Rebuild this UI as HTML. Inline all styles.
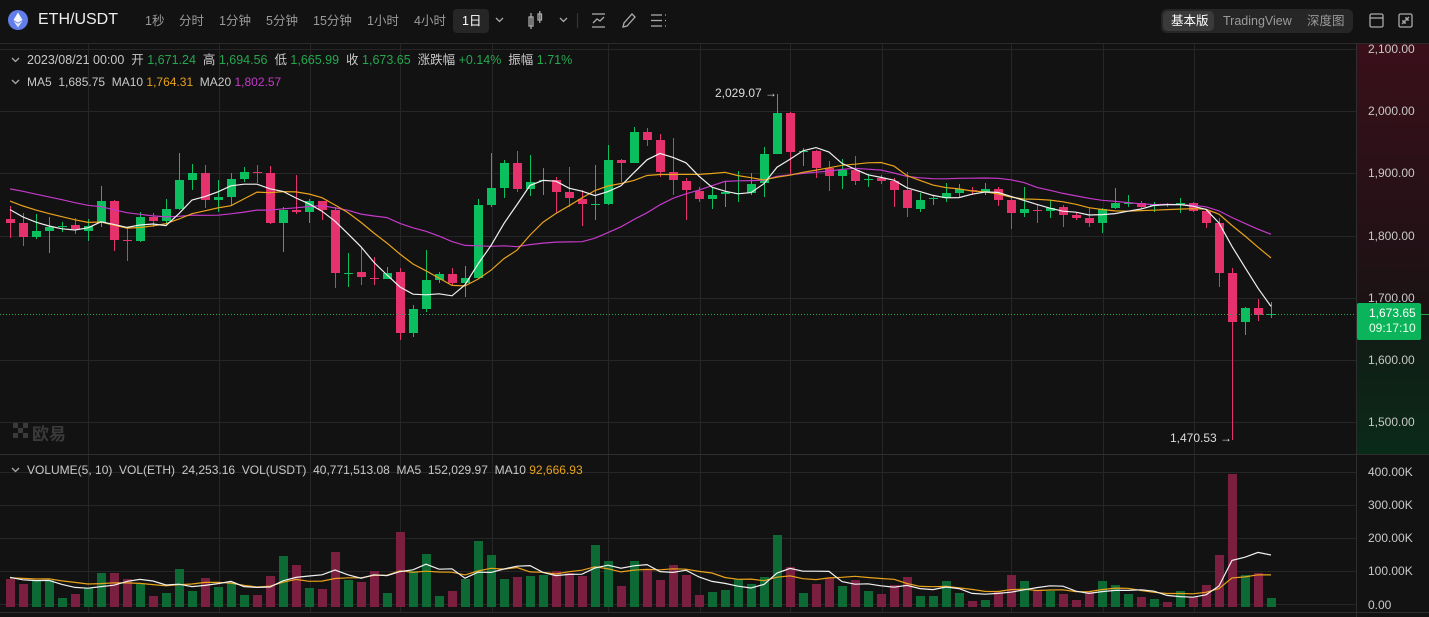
<!DOCTYPE html>
<html><head><meta charset="utf-8">
<style>
*{margin:0;padding:0;box-sizing:border-box}
body{width:1429px;height:617px;background:#121212;overflow:hidden;font-family:"Liberation Sans","Noto Sans CJK SC",sans-serif;color:#ddd;position:relative}
.t{position:absolute;white-space:nowrap}
.iv{position:absolute;top:12px;font-size:12.5px;line-height:18px;color:#9a9a9a;white-space:nowrap}
.g{color:#25a750}
.info{font-size:12.5px;line-height:16px;color:#c8c8c8}
.ax{position:absolute;left:1368px;font-size:12px;color:#c8c8c8}
</style></head><body>
<svg id="s" width="1429" height="617" style="position:absolute;left:0;top:0">
<defs>
<linearGradient id="rg" x1="0" y1="0" x2="0" y2="1"><stop offset="0" stop-color="#3a0f1a"/><stop offset="1" stop-color="#1a1214"/></linearGradient>
<linearGradient id="gg" x1="0" y1="0" x2="0" y2="1"><stop offset="0" stop-color="#121a15"/><stop offset="1" stop-color="#0a2a18"/></linearGradient>
</defs>
<rect x="1356" y="43" width="73" height="271" fill="url(#rg)"/>
<rect x="1356" y="314" width="73" height="140" fill="url(#gg)"/>
<g id="grid" stroke="#262626" stroke-width="1"></g>
<g id="vol"></g>
<g id="vma"></g>
<g id="cand"></g>
<g id="ma"></g>
<line x1="0" y1="314.5" x2="1356" y2="314.5" stroke="#25a750" stroke-width="1" stroke-dasharray="1,2"/>
<line x1="1421" y1="314.5" x2="1429" y2="314.5" stroke="#25a750"/>
<line x1="1356.5" y1="43" x2="1356.5" y2="617" stroke="#2e2e2e"/>
<line x1="0" y1="454.5" x2="1429" y2="454.5" stroke="#2e2e2e"/>
<line x1="0" y1="612.5" x2="1429" y2="612.5" stroke="#2e2e2e"/>
<line x1="0" y1="43.5" x2="1429" y2="43.5" stroke="#2b2b2b"/>
<rect x="1357" y="303" width="64" height="37" rx="2" fill="#0bb45a"/>
<circle cx="18" cy="20" r="10" fill="#627eea"/>
<path d="M18 12.5 L13.5 20 L18 22.6 L22.5 20 Z" fill="#fff" opacity="0.95"/>
<path d="M18 23.6 L13.5 21 L18 27.5 L22.5 21 Z" fill="#fff" opacity="0.8"/>
<g stroke="#aaa" fill="none" stroke-width="1.3">
<path d="M496 18 l3.5 3.5 l3.5 -3.5"/>
<rect x="529" y="17" width="4" height="9"/><line x1="531" y1="13" x2="531" y2="29"/>
<rect x="538" y="14" width="3.5" height="6"/><line x1="539.8" y1="11" x2="539.8" y2="23"/>
<path d="M560 18 l3.5 3.5 l3.5 -3.5"/>
<line x1="577.5" y1="13" x2="577.5" y2="28" stroke="#333"/>
<line x1="592" y1="14" x2="605" y2="14"/><line x1="592" y1="27" x2="605" y2="27"/><path d="M593 23 l4 -4 l3 2 l4 -4"/>
<path d="M623 27 l1 -4 l8 -9 l3 3 l-8 9 z"/>
<line x1="651" y1="15" x2="662" y2="15"/><line x1="651" y1="20.5" x2="662" y2="20.5"/><line x1="651" y1="26" x2="662" y2="26"/><line x1="665" y1="15" x2="666" y2="15"/><line x1="665" y1="20.5" x2="666" y2="20.5"/><line x1="665" y1="26" x2="666" y2="26"/>
<rect x="1370" y="14" width="13" height="13" rx="1.5"/><line x1="1370" y1="18" x2="1383" y2="18"/>
<rect x="1399" y="14" width="13" height="13" rx="1.5"/><path d="M1402 24 l3 -3 M1402 21 h3 v3 M1409 17 l-3 3 M1406 17 v3 h3"/>
<path d="M12 58 l3.5 3.5 l3.5 -3.5"/>
<path d="M12 80 l3.5 3.5 l3.5 -3.5"/>
<path d="M12 468 l3.5 3.5 l3.5 -3.5"/>
</g>
<rect x="1161" y="9" width="192" height="24" rx="6" fill="#262626"/>
<rect x="1163" y="11" width="51" height="20" rx="5" fill="#3a3a3a"/>
<rect x="453" y="9" width="36" height="24" rx="4" fill="#262626"/>
<g fill="#3a3a3a"><rect x="13" y="423" width="5" height="5"/><rect x="23" y="423" width="5" height="5"/><rect x="18" y="428" width="5" height="5"/><rect x="13" y="433" width="5" height="5"/><rect x="23" y="433" width="5" height="5"/></g>
</svg>
<div class="t" style="left:38px;top:11px;font-size:16px;color:#eee">ETH/USDT</div>
<div class="iv" style="left:145px">1秒</div>
<div class="iv" style="left:179px">分时</div>
<div class="iv" style="left:219px">1分钟</div>
<div class="iv" style="left:266px">5分钟</div>
<div class="iv" style="left:313px">15分钟</div>
<div class="iv" style="left:367px">1小时</div>
<div class="iv" style="left:414px">4小时</div>
<div class="iv" style="left:462px;color:#fff">1日</div>
<div class="iv" style="left:1171px;color:#fff">基本版</div>
<div class="iv" style="left:1223px">TradingView</div>
<div class="iv" style="left:1307px">深度图</div>
<div class="t" style="left:32px;top:420px;font-size:17px;color:#3a3a3a;font-weight:bold">欧易</div>

<div class="t info" style="left:27px;top:52px">2023/08/21 00:00&nbsp; 开 <span class="g">1,671.24</span>&nbsp; 高 <span class="g">1,694.56</span>&nbsp; 低 <span class="g">1,665.99</span>&nbsp; 收 <span class="g">1,673.65</span>&nbsp; 涨跌幅 <span class="g">+0.14%</span>&nbsp; 振幅 <span class="g">1.71%</span></div>
<div class="t info" style="left:27px;top:74px;font-size:12px">MA5&nbsp; 1,685.75&nbsp; MA10 <span style="color:#e8a21b">1,764.31</span>&nbsp; MA20 <span style="color:#c43ac9">1,802.57</span></div>
<div class="t info" style="left:27px;top:462px;font-size:12px">VOLUME(5, 10)&nbsp; VOL(ETH)&nbsp; 24,253.16&nbsp; VOL(USDT)&nbsp; 40,771,513.08&nbsp; MA5&nbsp; 152,029.97&nbsp; MA10 <span style="color:#e8a21b">92,666.93</span></div>
<div class="t info" style="left:715px;top:85px;color:#ddd;font-size:12px">2,029.07 →</div>
<div class="t info" style="left:1170px;top:430px;color:#ddd;font-size:12px">1,470.53 →</div>

<div class="ax" style="top:42px">2,100.00</div>
<div class="ax" style="top:104px">2,000.00</div>
<div class="ax" style="top:166px">1,900.00</div>
<div class="ax" style="top:229px">1,800.00</div>
<div class="ax" style="top:291px">1,700.00</div>
<div class="ax" style="top:353px">1,600.00</div>
<div class="ax" style="top:415px">1,500.00</div>
<div class="ax" style="top:306px;left:1369px;color:#fff">1,673.65</div>
<div class="ax" style="top:321px;left:1369px;color:#e8ffe8">09:17:10</div>
<div class="ax" style="top:465px">400.00K</div>
<div class="ax" style="top:498px">300.00K</div>
<div class="ax" style="top:531px">200.00K</div>
<div class="ax" style="top:564px">100.00K</div>
<div class="ax" style="top:598px">0.00</div>
<script>
var C=[[219,223,206,238,0],[223,237,213,246,0],[231,237,214,239,1],[227,231,217,253,1],[226,227,222,232,1],[225,229,218,234,0],[226,231,219,241,1],[201,223,186,227,1],[201,240,200,251,0],[240,241,228,261,0],[217,241,212,242,1],[217,221,213,227,0],[209,221,199,223,1],[180,209,153,210,1],[173,180,164,190,1],[173,200,165,208,0],[197,200,180,212,1],[179,197,173,205,1],[172,179,167,182,1],[172,173,165,183,0],[173,223,166,224,0],[210,223,207,252,1],[210,212,175,214,0],[201,212,199,223,1],[201,210,202,220,0],[210,273,207,288,0],[273,274,253,287,1],[272,277,247,285,0],[278,279,257,285,0],[273,279,267,279,1],[272,333,268,340,0],[309,333,305,337,1],[280,309,250,312,1],[274,280,272,283,1],[274,283,268,286,0],[278,283,266,297,1],[205,278,199,278,1],[188,205,153,207,1],[163,188,160,198,1],[163,189,151,192,0],[182,189,155,196,1],[180,181,168,195,1],[180,192,177,213,0],[192,198,167,207,0],[199,204,190,226,0],[204,205,165,220,1],[160,204,145,205,1],[160,163,159,182,0],[132,163,127,163,1],[132,140,128,146,0],[140,172,134,177,0],[172,180,138,195,0],[181,190,178,220,0],[191,199,187,202,0],[195,199,187,209,1],[192,194,182,207,1],[193,194,171,202,1],[184,193,173,195,1],[154,183,147,197,1],[113,154,94,154,1],[113,152,112,175,0],[151,152,148,166,1],[151,168,150,178,0],[168,176,161,191,0],[170,176,159,189,1],[170,181,156,185,0],[179,180,174,187,1],[178,181,175,184,0],[181,190,178,207,0],[190,208,172,217,0],[200,209,193,212,1],[198,199,195,205,1],[193,198,183,202,1],[189,193,184,197,1],[190,191,187,195,0],[189,192,183,195,1],[189,200,187,206,0],[200,213,197,229,0],[209,213,187,217,1],[210,211,205,223,0],[208,211,200,218,1],[207,215,205,227,0],[215,218,212,220,0],[218,223,208,227,0],[209,223,208,233,1],[203,208,188,209,1],[203,204,195,207,1],[203,207,201,208,0],[205,206,202,212,1],[204,205,203,207,0],[203,205,198,213,1],[203,211,202,212,0],[211,223,209,228,0],[223,273,218,287,0],[273,322,268,440,0],[308,322,307,335,1],[308,315,299,321,0],[314,315,302,318,1]];
var V=[579,584,581,580,598,594,588,573,573,579,584,596,593,569,591,578,587,582,595,595,576,556,565,588,589,552,580,582,571,593,532,571,554,596,591,579,541,555,579,577,576,575,571,573,576,545,561,586,561,570,580,565,575,595,592,590,579,584,577,535,567,593,584,578,586,580,591,594,585,577,596,596,581,593,601,600,592,575,581,590,591,594,600,592,581,585,594,597,599,602,591,597,585,555,474,575,573,598];
var NS="http://www.w3.org/2000/svg";
function el(p,t,a){var e=document.createElementNS(NS,t);for(var k in a)e.setAttribute(k,a[k]);document.getElementById(p).appendChild(e);return e;}
[49,111,173,236,298,360,422].forEach(function(y){el('grid','line',{x1:0,x2:1356,y1:y+.5,y2:y+.5});});
[472,505,538,571,604].forEach(function(y){el('grid','line',{x1:0,x2:1356,y1:y+.5,y2:y+.5});});
[88,219,310,400,492,608,700,790,882,1011,1103,1194].forEach(function(x){el('grid','line',{x1:x+.5,x2:x+.5,y1:43,y2:612});});
var GC="#0bbf5e",RC="#e5316c",GV="#0e6a35",RV="#7b1f40";
var cl=[],vv=[];
C.forEach(function(c,i){var x=10+13*i,g=c[4];var col=g?GC:RC;
 el('cand','line',{x1:x+.5,x2:x+.5,y1:c[2],y2:c[3],stroke:col,'stroke-width':1});
 el('cand','rect',{x:x-4,y:c[0],width:9,height:Math.max(1,c[1]-c[0]),fill:col});
 cl.push(g?c[0]:c[1]);
 var vt=V[i];el('vol','rect',{x:x-4,y:vt,width:9,height:607-vt,fill:g?GV:RV});vv.push(607-vt);
});
function ma(a,n){var r=[];for(var i=0;i<a.length;i++){var s=0,k=0;for(var j=Math.max(0,i-n+1);j<=i;j++){s+=a[j];k++;}r.push(s/k);}return r;}
function line(g,a,col,f){var d='';a.forEach(function(v,i){d+=(i?'L':'M')+(10+13*i)+' '+f(v).toFixed(1);});el(g,'path',{d:d,fill:'none',stroke:col,'stroke-width':1.2});}
var id=function(v){return v;};
var pre=[175,172,170,170,172,175,178,182,185,188,190,192,195,198,200,205,208,212];
var cl2=pre.concat(cl);
function mac(n){return ma(cl2,n).slice(pre.length);}
line('ma',mac(20),'#c43ac9',id);line('ma',mac(10),'#e8a21b',id);line('ma',mac(5),'#f0f0f0',id);
var vf=function(v){return 607-v;};
var vpre=[30,28,32,25,30,28,35,30,26,29];var vv2=vpre.concat(vv);
line('vma',ma(vv2,10).slice(vpre.length),'#e8a21b',vf);line('vma',ma(vv2,5).slice(vpre.length),'#f0f0f0',vf);
</script>
</body></html>
